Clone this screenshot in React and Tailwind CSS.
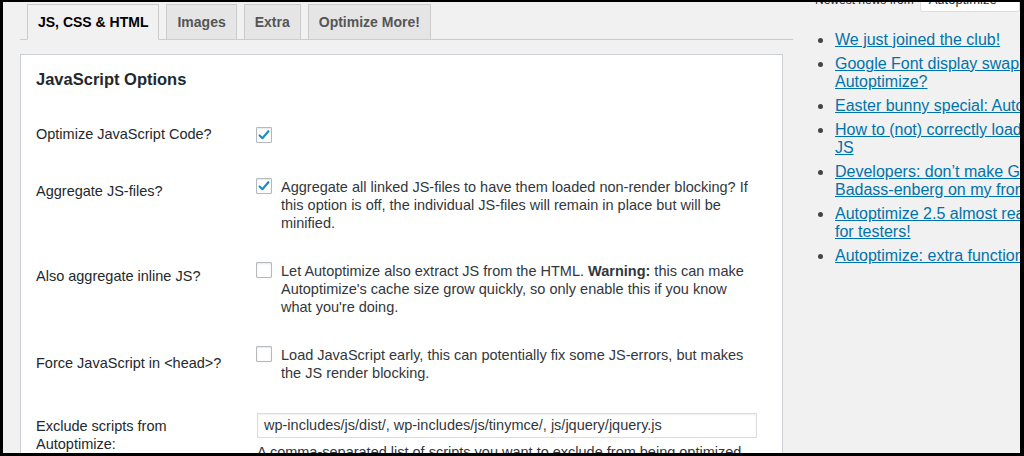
import React from 'react'

// ── Checkbox ────────────────────────────────────────────────────────────────
function Check({ on }) {
  return (
    <span className="w-[16px] h-[16px] shrink-0 bg-white border border-[#b4b9be] rounded-[1px] shadow-[inset_0_1px_2px_rgba(0,0,0,0.1)] flex items-center justify-center">
      {on && (
        <svg width="14" height="14" viewBox="0 0 14 14">
          <path d="M2.6 7.4 L5.4 10.2 L11.4 3.2" fill="none" stroke="#1e8cbe" strokeWidth="2.1" strokeLinecap="round" strokeLinejoin="round" />
        </svg>
      )}
    </span>
  )
}

// ── Option row ──────────────────────────────────────────────────────────────
function Row({ label, labelTop, boxTop = 0, on, children, className = '' }) {
  return (
    <div className={`flex items-start ${className}`}>
      <div className="w-[220px] shrink-0 text-[14.5px] leading-[18px] text-[#23282d]" style={{ marginTop: labelTop }}>
        {label}
      </div>
      <div className="flex items-start gap-[9px]" style={{ marginTop: boxTop }}>
        <Check on={on} />
        {children && <p className="w-[475px] text-[14.5px] leading-[18px] text-[#32373c]">{children}</p>}
      </div>
    </div>
  )
}

const tabs = ['JS, CSS & HTML', 'Images', 'Extra', 'Optimize More!']

const news = [
  ['We just joined the club!'],
  ['Google Font display swap with', 'Autoptimize?'],
  ['Easter bunny special: Autoptimize 2.5 beta'],
  ['How to (not) correctly load Gutenberg', 'JS'],
  ["Developers: don\u2019t make Gutenberg go", 'Badass-enberg on my frontend!'],
  ['Autoptimize 2.5 almost ready, looking', 'for testers!'],
  ['Autoptimize: extra functionality for power users'],
]

export default function App() {
  return (
    <div className="w-[1024px] h-[456px] overflow-hidden flex bg-[#f1f1f1] border-black border-t-2 border-l-[3px] border-r-4 border-b-[3px] font-['Liberation_Sans',Arial,sans-serif]">
      {/* Main column */}
      <div className="w-[790px] shrink-0 pl-[17px]">
        {/* Tabs */}
        <div className="mt-[2px] flex gap-[7px] pl-[7px] border-b border-[#ccc]">
          {tabs.map((t, i) => (
            <div
              key={t}
              className={`h-[36px] -mb-px px-[10px] flex items-center border border-[#ccc] text-[14px] font-bold ${
                i === 0 ? 'bg-[#f1f1f1] border-b-[#f1f1f1] text-black' : 'bg-[#e5e5e5] text-[#555]'
              }`}
            >
              {t}
            </div>
          ))}
        </div>

        {/* Panel */}
        <div className="mt-[14px] mr-[10px] bg-white border border-[#ccd0d4] pl-[15px] pt-[13px] pb-[40px]">
          <h2 className="text-[16.5px] leading-[22px] font-bold text-[#23282d]">JavaScript Options</h2>

          <Row className="mt-[35px]" label="Optimize JavaScript Code?" labelTop={0} boxTop={2} on />

          <Row className="mt-[35px]" label="Aggregate JS-files?" labelTop={4} on>
            Aggregate all linked JS-files to have them loaded non-render blocking? If this option is off, the
            individual JS-files will remain in place but will be minified.
          </Row>

          <Row className="mt-[30px]" label="Also aggregate inline JS?" labelTop={5}>
            Let Autoptimize also extract JS from the HTML. <strong>Warning:</strong> this can make Autoptimize's
            cache size grow quickly, so only enable this if you know what you're doing.
          </Row>

          <Row className="mt-[30px]" label="Force JavaScript in <head>?" labelTop={8}>
            Load JavaScript early, this can potentially fix some JS-errors, but makes the JS render blocking.
          </Row>

          <div className="mt-[31px] flex items-start">
            <div className="w-[221px] shrink-0 mt-[4px] text-[14.5px] leading-[18px] text-[#23282d]">
              Exclude scripts from
              <br />
              Autoptimize:
            </div>
            <div>
              <div className="w-[500px] h-[25px] bg-white border border-[#ddd] shadow-[inset_0_1px_2px_rgba(0,0,0,0.07)] px-[6px] flex items-center text-[14.5px] text-[#32373c]">
                wp-includes/js/dist/, wp-includes/js/tinymce/, js/jquery/jquery.js
              </div>
              <p className="mt-[5px] w-[500px] text-[14.5px] leading-[18px] text-[#32373c]">
                A comma-separated list of scripts you want to exclude from being optimized, for example
                'whatever.js, another.js' (without the quotes) to exclude those scripts from being aggregated.
              </p>
            </div>
          </div>
        </div>
      </div>

      {/* Sidebar */}
      <div className="flex-1 overflow-hidden">
        <div className="-mt-[14px] ml-[22px] flex items-center gap-[6px] text-[12px] text-[#23282d] whitespace-nowrap">
          <span>Newest news from</span>
          <div className="w-[120px] h-[24px] bg-white border border-[#ddd] rounded-[3px] px-[8px] flex items-center text-[13px]">
            Autoptimize
          </div>
        </div>
        <ul className="mt-[19px] flex flex-col gap-[6px]">
          {news.map((lines, i) => (
            <li key={i} className="flex items-start">
              <span className="ml-[25px] mt-[7px] w-[5px] h-[5px] rounded-full bg-[#444] shrink-0" />
              <a className="ml-[12px] text-[16px] leading-[18px] text-[#0073aa] underline whitespace-nowrap">
                {lines.map((l, j) => (
                  <React.Fragment key={j}>
                    {j > 0 && <br />}
                    {l}
                  </React.Fragment>
                ))}
              </a>
            </li>
          ))}
        </ul>
      </div>
    </div>
  )
}
